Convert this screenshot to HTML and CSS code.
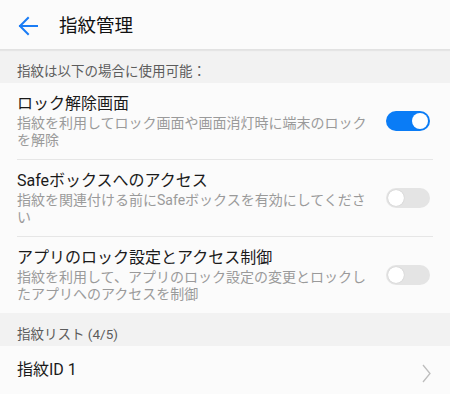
FILE: index.html
```html
<!DOCTYPE html>
<html lang="ja">
<head>
<meta charset="utf-8">
<link rel="stylesheet" href="styles.css">
</head>
<body>
<header class="appbar">
  <svg class="back" width="20" height="20" viewBox="0 0 20 20"><path d="M19 10H2M10 2L2 10L10 18" fill="none" stroke="#1a7cf5" stroke-width="2" stroke-linecap="square"/></svg>
  <h1 class="title">指紋管理</h1>
</header>
<div class="section">指紋は以下の場合に使用可能：</div>
<div class="row">
  <div class="text">
    <div class="row-title">ロック解除画面</div>
    <div class="row-sub">指紋を利用してロック画面や画面消灯時に端末のロックを解除</div>
  </div>
  <div class="toggle on"><span class="knob"></span></div>
</div>
<div class="row">
  <div class="text">
    <div class="row-title">Safeボックスへのアクセス</div>
    <div class="row-sub">指紋を関連付ける前にSafeボックスを有効にしてください</div>
  </div>
  <div class="toggle"><span class="knob"></span></div>
</div>
<div class="row last">
  <div class="text">
    <div class="row-title">アプリのロック設定とアクセス制御</div>
    <div class="row-sub">指紋を利用して、アプリのロック設定の変更とロックしたアプリへのアクセスを制御</div>
  </div>
  <div class="toggle"><span class="knob"></span></div>
</div>
<div class="section">指紋リスト (4/5)</div>
<div class="row nav">
  <div class="text">
    <div class="row-title">指紋ID 1</div>
  </div>
  <svg class="chev" width="9" height="19" viewBox="0 0 9 19"><path d="M1 1L8 9.5L1 18" fill="none" stroke="#bdbdbd" stroke-width="1.3"/></svg>
</div>
</body>
</html>
```

FILE: styles.css
```css
* { box-sizing: border-box; }
html, body { margin: 0; padding: 0; }
body {
  width: 450px;
  height: 394px;
  overflow: hidden;
  background: #fbfbfb;
  font-family: Roboto, "Noto Sans CJK JP", sans-serif;
}
.appbar {
  height: 50px;
  display: flex;
  align-items: center;
  padding: 3px 0 0 18px;
  border-bottom: 1px solid #e2e2e2;
  box-shadow: 0 1px 1px rgba(0,0,0,0.05);
  position: relative;
}
.back { display: block; }
.title {
  margin: 0 0 0 21px;
  font-size: 18.5px;
  font-weight: 400;
  color: #111;
  line-height: 24px;
}
.section {
  background: #f2f2f2;
  padding: 11px 17px 2px;
  font-size: 13.5px;
  line-height: 20px;
  color: #5c5c5c;
}
.row {
  margin: 0 17px;
  display: flex;
  align-items: center;
  padding: 10px 0;
  border-bottom: 1px solid #e6e6e6;
}
.row.last { border-bottom: none; }
.text { flex: 1; min-width: 0; }
.row-title {
  font-size: 16px;
  line-height: 22px;
  color: #1a1a1a;
}
.row-sub {
  font-size: 14px;
  line-height: 17px;
  color: #9a9a9a;
}
.toggle {
  width: 44px;
  height: 20px;
  border-radius: 10px;
  background: #e4e4e4;
  margin-left: 16px;
  margin-right: 3px;
  position: relative;
  flex: none;
}
.toggle .knob {
  position: absolute;
  left: 2px;
  top: 2px;
  width: 16px;
  height: 16px;
  border-radius: 50%;
  background: #fff;
  box-shadow: 0 0 1px rgba(0,0,0,0.25);
}
.toggle.on { background: #0a7cf6; }
.toggle.on .knob {
  left: auto;
  right: 2px;
  box-shadow: none;
}
.row.nav {
  border-bottom: none;
  padding: 10px 0 8px;
}
.chev { display: block; margin-right: 2px; margin-top: 8px; }
```
